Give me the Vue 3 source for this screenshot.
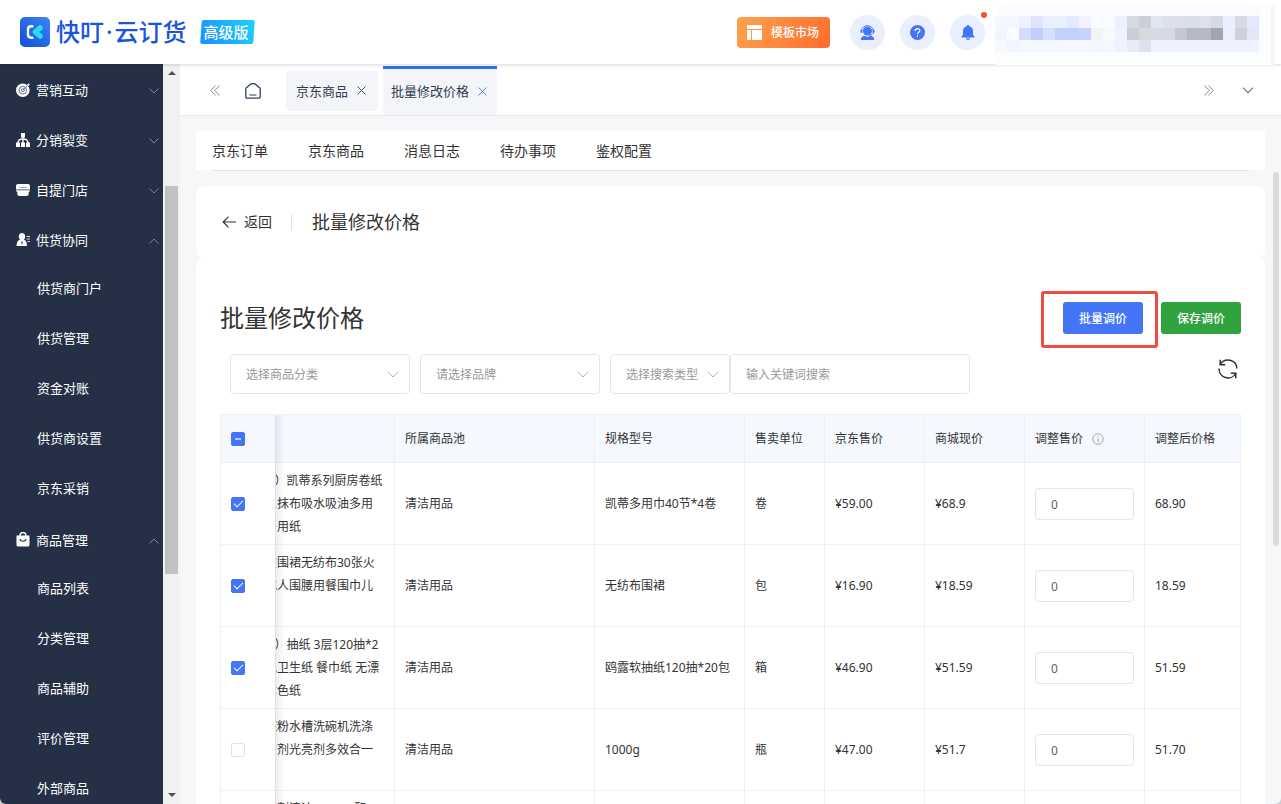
<script setup>
import { ref } from 'vue'

const menu = [
  { label: '营销互动', icon: 'target', open: false, children: [] },
  { label: '分销裂变', icon: 'tree', open: false, children: [] },
  { label: '自提门店', icon: 'store', open: false, children: [] },
  { label: '供货协同', icon: 'person', open: true, children: ['供货商门户', '供货管理', '资金对账', '供货商设置', '京东采销'] },
  { label: '商品管理', icon: 'bag', open: true, children: ['商品列表', '分类管理', '商品辅助', '评价管理', '外部商品'] },
]

const subnav = ['京东订单', '京东商品', '消息日志', '待办事项', '鉴权配置']

const rows = ref([
  { checked: true, name: ['w）凯蒂系列厨房卷纸', '人抹布吸水吸油多用', '房用纸'], pool: '清洁用品', spec: '凯蒂多用巾40节*4卷', unit: '卷', jd: '¥59.00', mall: '¥68.9', adjust: '0', after: '68.90' },
  { checked: true, name: ['性围裙无纺布30张火', '成人围腰用餐围巾儿'], pool: '清洁用品', spec: '无纺布围裙', unit: '包', jd: '¥16.90', mall: '¥18.59', adjust: '0', after: '18.59' },
  { checked: true, name: ['w）抽纸 3层120抽*2', '包卫生纸 餐巾纸 无漂', '本色纸'], pool: '清洁用品', spec: '鸥露软抽纸120抽*20包', unit: '箱', jd: '¥46.90', mall: '¥51.59', adjust: '0', after: '51.59' },
  { checked: false, name: ['碗粉水槽洗碗机洗涤', '洁剂光亮剂多效合一'], pool: '清洁用品', spec: '1000g', unit: '瓶', jd: '¥47.00', mall: '¥51.7', adjust: '0', after: '51.70' },
  { checked: false, name: ['洗剂清洁 1000g 配'], pool: '', spec: '', unit: '', jd: '', mall: '', adjust: '0', after: '' },
])

const p = (s) => s.split(' ').map((c) => '#' + c)
const mosaic = [
  ...p('fcfdff fafbff fafbff fafbff fafbff fafbff fafbff fafbff fafbff fafbff fafbff fafbff fafbff fafbff fafbff fafbff fafbff fafbff fafbff fafbff fafbff fafbff fcfdfd'),
  ...p('f4f7ff f4f7ff eef2fe dee4ff e9effe e9effd e5e9ff f1f1ff fafbff fafbff eaf0ff d4dae3 cacfd8 e0e5f2 dce1ec dae0e9 d9deeb dde1ed d4dbe5 e9efff d7dbe6 e3e9fc fafdff'),
  ...p('f1f5ff fbfcff d3dcff c2cffd d3dfff c6d0ff c2d0ff c8d2ff f3f4f8 f9f9f9 f0f3ff cbced7 d8d9db d7dae6 d6dae6 c7c6d0 b6b9c6 b6b9c6 a2a4af e9efff cfd0dc e1e7f8 fafdff'),
  ...p('f8f9ff f1f5ff f4f7ff f4f7ff f4f7ff f4f7ff f4f7ff f4f7ff f4f7ff f4f7ff f0f3ff e8ecf5 dee1ea eff1ff eff1ff eff1ff eff1ff eff1ff eff1ff eff1ff eff1ff eff1ff fafdff'),
]
</script>

<template>
  <div class="app">
    <header class="header">
      <div class="brand">
        <svg class="logo" viewBox="0 0 30 30">
          <defs>
            <linearGradient id="lg" x1="1" y1="0" x2="0" y2="1">
              <stop offset="0" stop-color="#3f83f4" /><stop offset="1" stop-color="#0f4fd8" />
            </linearGradient>
          </defs>
          <rect width="30" height="30" rx="5" fill="url(#lg)" />
          <path d="M12.500 9.300H11.300C9.200 9.300 8 10.500 8 12.500v5c0 2 1.200 3.200 3.300 3.200h1.200" fill="none" stroke="#fff" stroke-width="2.400" stroke-linecap="round" />
          <path d="M20.200 10.700 15.200 15l5 4.300" fill="none" stroke="#27dcf2" stroke-width="5.200" stroke-linecap="round" stroke-linejoin="round" />
        </svg>
        <span class="brand-name">快叮<span class="sep">·</span>云订货</span>
        <span class="edition">高级版</span>
      </div>
      <div class="header-actions">
        <button class="market" type="button">
          <svg width="15" height="15" viewBox="0 0 15 15" fill="#fff"><path d="M0 0h15v4H0zM0 5h4v10H0zM5 5h10v10H5z" /></svg>
          <span>模板市场</span>
        </button>
        <button class="round" type="button" aria-label="客服">
          <svg width="15" height="15" viewBox="0 0 15 15"><circle cx="7.500" cy="6" r="4.500" fill="#4475f7" /><path d="M1.500 7V5.500C2.300 2.500 4.500.7 7.500.7s5.200 1.800 6 4.800V7M13.400 7.500c-.5 1.800-2 2.700-4 3" fill="none" stroke="#4475f7" /><path d="M.5 4.800h2v3h-2zM12.500 4.800h2v3h-2z" fill="#4475f7" /><path d="M.8 15c0-2.600 1.500-3.900 3.700-4.200L7.500 12l3-1.200c2.200.3 3.700 1.600 3.700 4.200z" fill="#4475f7" /></svg>
        </button>
        <button class="round" type="button" aria-label="帮助">
          <svg width="15" height="15" viewBox="0 0 15 15"><circle cx="7.500" cy="7.500" r="7.500" fill="#4475f7" /><path d="M5.200 5.900c0-1.300 1-2.200 2.300-2.200s2.300.8 2.300 2c0 1.500-2.300 1.700-2.300 3.500M7.500 10.400v1.300" fill="none" stroke="#fff" stroke-width="1.200" /></svg>
        </button>
        <button class="round" type="button" aria-label="通知">
          <svg width="14" height="15" viewBox="0 0 14 15" fill="#4475f7"><path d="M6 0h2v1.200c2.500.4 4 2.200 4 4.600V10l1.500 1.600v.9H.5v-.9L2 10V5.800c0-2.400 1.500-4.200 4-4.600zM5 13.300h4c-.2 1-1 1.700-2 1.700s-1.800-.7-2-1.700z" /></svg>
          <i class="dot"></i>
        </button>
        <div class="account">
          <i v-for="(c, i) in mosaic" :key="i" :style="{ background: c }"></i>
        </div>
      </div>
    </header>

    <div class="body">
      <aside class="sidebar">
        <nav class="menu">
          <template v-for="m in menu" :key="m.label">
            <a class="item" href="#">
              <svg v-if="m.icon === 'target'" width="14" height="14" viewBox="0 0 14 14"><circle cx="6.800" cy="7.200" r="6.800" fill="#fff" /><g fill="none" stroke="#66708a"><circle cx="6.800" cy="7.200" r="3.800" /><circle cx="6.800" cy="7.200" r="1.500" /><path d="M6.800 7.200 12.500 1.500" /></g><path d="m11 2 2-2 .2 1 .8.300-2 2z" fill="#fff" /></svg>
              <svg v-else-if="m.icon === 'tree'" width="14" height="14" viewBox="0 0 14 14"><path d="M5 0h4v4.500H5zM0 9.500h4V14H0zM5 9.500h4V14H5zM10 9.500h4V14h-4z" fill="#fff" /><path d="M7 4v6M7 6C3.500 6 2 7.500 2 10M7 6c3.500 0 5 1.500 5 4" fill="none" stroke="#fff" stroke-width="1.400" /></svg>
              <svg v-else-if="m.icon === 'store'" width="14" height="12" viewBox="0 0 14 12"><path d="M2 0h10a2 2 0 0 1 2 2v3.500H0V2a2 2 0 0 1 2-2zM0 6.200h14c-.2 1-.6 1.500-1.300 1.700V10a2 2 0 0 1-2 2H3.300a2 2 0 0 1-2-2V7.900C.6 7.700.2 7.200 0 6.200z" fill="#fff" /><path d="M3 3.500h8" stroke="#a4abbb" /></svg>
              <svg v-else-if="m.icon === 'person'" width="14" height="13" viewBox="0 0 14 13"><path d="M6 0c2 0 3.200 1.500 3.200 3.400 0 1.300-.5 2.500-1.300 3.200 1.900.8 3.100 2.600 3.100 6.400H.5c0-3.800 1.500-5.600 3.600-6.400-.8-.7-1.300-1.900-1.300-3.200C2.800 1.500 4 0 6 0z" fill="#fff" /><path d="m6 8 .7 1.500L6 12l-.7-2.500z" fill="#252f46" /><path d="M10.500 3.500H14M10.500 6H14M11.500 8.500H14" stroke="#d5d9e2" /></svg>
              <svg v-else width="14" height="15" viewBox="0 0 14 15"><path d="M4 5V3.500a3 3 0 0 1 6 0V5" fill="none" stroke="#fff" stroke-width="1.400" /><path d="M.5 3.500h13V13a1.500 1.500 0 0 1-1.500 1.500H2A1.500 1.500 0 0 1 .5 13z" fill="#fff" /><path d="M4 7c.5 3 5.500 3 6 0" fill="none" stroke="#252f46" stroke-width="1.200" /></svg>
              <span>{{ m.label }}</span>
              <svg class="caret" :class="{ up: m.open }" width="10" height="6" viewBox="0 0 10 6"><path d="m.5.500 4.500 4.500L9.500.500" fill="none" stroke="#7f8491" /></svg>
            </a>
            <div v-if="m.children.length" class="children">
              <a v-for="c in m.children" :key="c" class="child" href="#">{{ c }}</a>
            </div>
          </template>
        </nav>
        <div class="scrollbar">
          <svg width="8" height="4" viewBox="0 0 8 4"><path d="M4 0 8 4H0z" fill="#505050" /></svg>
          <div class="track"><div class="thumb"></div></div>
          <svg width="8" height="4" viewBox="0 0 8 4"><path d="M0 0h8L4 4z" fill="#505050" /></svg>
        </div>
      </aside>

      <main class="main">
        <div class="tabbar">
          <svg width="10" height="11" viewBox="0 0 10 11"><path d="M5.500.500.700 5.500l4.800 5M9.500.500 4.700 5.500l4.800 5" fill="none" stroke="#8b8f99" /></svg>
          <svg class="home" width="16" height="16" viewBox="0 0 16 16"><path d="M.8 5.200 5.500 1.200Q8 0 10.500 1.200L15.200 5.200V14a1.200 1.200 0 0 1-1.200 1.200H2A1.200 1.200 0 0 1 .8 14z" fill="none" stroke="#30405c" stroke-width="1.300" stroke-linejoin="round" /><path d="M4.500 12h7" stroke="#7d828c" stroke-width="1.600" /></svg>
          <a class="tab" href="#">京东商品<svg width="9" height="9" viewBox="0 0 9 9"><path d="m.5.500 8 8m0-8-8 8" stroke="#4a4f5a" /></svg></a>
          <a class="tab active" href="#">批量修改价格<svg width="9" height="9" viewBox="0 0 9 9"><path d="m.5.500 8 8m0-8-8 8" stroke="#5b84f2" /></svg></a>
          <div class="tab-tools">
            <svg width="10" height="11" viewBox="0 0 10 11"><path d="m.5.500 4.800 5-4.800 5M4.500.500l4.800 5-4.800 5" fill="none" stroke="#8b8f99" /></svg>
            <svg width="12" height="7" viewBox="0 0 12 7"><path d="m1 .7 5 5 5-5" fill="none" stroke="#777" stroke-width="1.200" /></svg>
          </div>
        </div>

        <div class="content">
          <nav class="subnav">
            <a v-for="s in subnav" :key="s" href="#">{{ s }}</a>
          </nav>
          <div class="rule"></div>

          <section class="card page-head">
            <a class="back" href="#"><svg width="14" height="12" viewBox="0 0 14 12"><path d="M6.500.700 1.200 6l5.300 5.300M1.200 6H14" fill="none" stroke="#333" stroke-width="1.200" /></svg>返回</a>
            <h1>批量修改价格</h1>
          </section>

          <section class="card panel">
            <div class="panel-head">
              <h2>批量修改价格</h2>
              <div class="panel-actions">
                <div class="marked"><button class="btn blue" type="button">批量调价</button></div>
                <button class="btn green" type="button">保存调价</button>
              </div>
            </div>
            <div class="filters">
              <div class="select">
                <select aria-label="商品分类"><option>选择商品分类</option></select>
                <svg width="12" height="7" viewBox="0 0 12 7"><path d="m.7.700 5.300 5.300L11.300.700" fill="none" stroke="#aeb1b8" /></svg>
              </div>
              <div class="select">
                <select aria-label="品牌"><option>请选择品牌</option></select>
                <svg width="12" height="7" viewBox="0 0 12 7"><path d="m.7.700 5.300 5.300L11.300.700" fill="none" stroke="#aeb1b8" /></svg>
              </div>
              <div class="search">
                <div class="select narrow">
                  <select aria-label="搜索类型"><option>选择搜索类型</option></select>
                  <svg width="12" height="7" viewBox="0 0 12 7"><path d="m.7.700 5.300 5.300L11.300.700" fill="none" stroke="#aeb1b8" /></svg>
                </div>
                <input class="keyword" type="text" placeholder="输入关键词搜索" aria-label="关键词">
              </div>
              <button class="refresh" type="button" aria-label="刷新">
                <svg width="20" height="20" viewBox="0 0 20 20" fill="none" stroke="#333" stroke-width="1.500"><path d="M2.300 5.500A8.900 8.900 0 0 1 18.900 9.500M17.700 14.500A8.900 8.900 0 0 1 1.100 9.500" /><path d="M2.200.800v5h5M17.800 19.200v-5h-5" /></svg>
              </button>
            </div>

            <table>
              <colgroup>
                <col class="w-check"><col><col class="w-200"><col class="w-150"><col class="w-80"><col class="w-100"><col class="w-100"><col class="w-120"><col class="w-96">
              </colgroup>
              <thead>
                <tr>
                  <th class="pin"><input type="checkbox" :indeterminate="true" aria-label="全选"></th>
                  <th></th><th>所属商品池</th><th>规格型号</th><th>售卖单位</th><th>京东售价</th><th>商城现价</th>
                  <th>调整售价<svg class="info" width="12" height="12" viewBox="0 0 12 12" fill="none" stroke="#a3a6ad"><circle cx="6" cy="6" r="5.200" /><path d="M6 3v1M6 5v4" /></svg></th>
                  <th>调整后价格</th>
                </tr>
              </thead>
              <tbody>
                <tr v-for="(r, i) in rows" :key="i">
                  <td class="pin"><input v-model="r.checked" type="checkbox" :aria-label="'选择' + r.spec"></td>
                  <td><div class="name"><div v-for="n in r.name" :key="n">{{ n }}</div></div></td>
                  <td>{{ r.pool }}</td>
                  <td>{{ r.spec }}</td>
                  <td>{{ r.unit }}</td>
                  <td>{{ r.jd }}</td>
                  <td>{{ r.mall }}</td>
                  <td><input v-model="r.adjust" class="amount" type="text" aria-label="调整售价"></td>
                  <td>{{ r.after }}</td>
                </tr>
              </tbody>
            </table>
          </section>
          <div class="page-thumb"></div>
        </div>
      </main>
    </div>
  </div>
</template>

<style>
body {
  background: #c9ccd2;
}
</style>

<style scoped>
* {
  box-sizing: border-box;
}
.app {
  height: 100vh;
  display: flex;
  flex-direction: column;
  overflow: hidden;
  border-radius: 0 0 6px 6px;
  background: #f6f7f9;
  color: #333;
  font: 12px/20px "Noto Sans", "Noto Sans CJK SC", sans-serif;
}
a {
  color: inherit;
  text-decoration: none;
}
button,
input,
select {
  font: inherit;
  margin: 0;
}
button {
  border: 0;
  padding: 0;
  cursor: pointer;
}
svg {
  flex: none;
  display: block;
}
h1,
h2 {
  margin: 0;
  font-weight: 400;
}
.header {
  position: relative;
  z-index: 3;
  flex: none;
  height: 64px;
  padding: 0 6px 0 20px;
  display: flex;
  align-items: center;
  justify-content: space-between;
  background: #fff;
  box-shadow: 0 1px 3px rgba(0, 0, 0, 0.16);
}
.brand {
  display: flex;
  align-items: center;
}
.logo {
  width: 30px;
  height: 30px;
}
.brand-name {
  margin: 0 13px 0 6px;
  font-size: 24px;
  line-height: 30px;
  font-weight: 500;
  color: #1a56db;
}
.sep {
  padding: 0 2px;
}
.edition {
  position: relative;
  z-index: 0;
  width: 55px;
  padding-right: 2px;
  font-size: 15px;
  line-height: 24px;
  font-weight: 500;
  text-align: center;
  color: #fff;
}
.edition::before {
  content: "";
  position: absolute;
  inset: 0 1px;
  z-index: -1;
  border-radius: 2px;
  background: linear-gradient(60deg, #1890ff, #1fd0ff);
  transform: skewX(-4deg);
}
.header-actions {
  display: flex;
  align-items: center;
}
.market {
  display: flex;
  align-items: center;
  gap: 9px;
  width: 93px;
  height: 31px;
  padding-left: 10px;
  margin-right: 20px;
  border-radius: 4px;
  background: linear-gradient(120deg, #ffa24d, #ff6c2e);
  color: #fff;
  font-weight: 500;
  white-space: nowrap;
}
.market span {
  padding-top: 2px;
}
.round {
  position: relative;
  display: flex;
  align-items: center;
  justify-content: center;
  width: 35px;
  height: 35px;
  margin-right: 15px;
  border-radius: 50%;
  background: #e9efff;
}
.dot {
  position: absolute;
  top: -3px;
  right: -2px;
  width: 6px;
  height: 6px;
  border-radius: 50%;
  background: #ff5127;
}
.account {
  align-self: stretch;
  display: grid;
  grid-template-columns: repeat(23, 12px);
  grid-template-rows: 11px 12px 12px 12px;
  height: 60px;
  margin-top: 6px;
  margin-left: -5px;
  border-right: 4px solid #f4f5f5;
  background: #fcfefd;
}
.body {
  flex: 1;
  min-height: 0;
  display: flex;
}
.sidebar {
  flex: none;
  width: 180px;
  display: flex;
  background: #f1f1f1;
}
.menu {
  flex: 1;
  overflow: hidden;
  background: #252f46;
  color: #fff;
  font-size: 13px;
}
.item {
  display: flex;
  align-items: center;
  gap: 6px;
  height: 50px;
  padding: 1px 4px 0 16px;
}
.caret {
  margin-top: 2px;
  margin-left: auto;
}
.caret.up {
  transform: rotate(180deg);
}
.children {
  display: flex;
  flex-direction: column;
}
.child {
  height: 50px;
  padding-left: 37px;
  line-height: 48px;
}
.scrollbar {
  width: 17px;
  display: flex;
  flex-direction: column;
  align-items: center;
  padding: 7px 0;
}
.track {
  flex: 1;
  width: 13px;
  padding: 111px 0 0;
}
.thumb {
  height: 64%;
  background: #c1c1c1;
}
.main {
  flex: 1;
  min-width: 0;
  display: flex;
  flex-direction: column;
}
.tabbar {
  flex: none;
  display: flex;
  align-items: center;
  height: 52px;
  padding: 2px 27px 0 30px;
  border-bottom: 1px solid #ebecef;
  background: #fff;
}
.home {
  margin: 0 25px;
}
.tab {
  display: flex;
  align-items: center;
  gap: 9px;
  height: 40px;
  padding: 0 12px 0 10px;
  margin-right: 5px;
  border-radius: 4px;
  background: #f4f5f8;
  color: #303a50;
  font-size: 13px;
}
.tab.active {
  align-self: stretch;
  height: auto;
  padding: 0 10px 2px 8px;
  border-top: 3px solid #2f73e8;
  border-radius: 0;
}
.tab-tools {
  display: flex;
  align-items: center;
  gap: 28px;
  margin-left: auto;
}
.content {
  position: relative;
  flex: 1;
  min-height: 0;
  display: flex;
  flex-direction: column;
  padding: 15px 16px 0;
  overflow: hidden;
}
.subnav {
  flex: none;
  display: flex;
  align-items: center;
  gap: 40px;
  height: 39px;
  padding: 0 16px;
  background: #fff;
  font-size: 14px;
}
.rule {
  flex: none;
  height: 1px;
  margin: 0 16px 15px;
  background: #e3e4e8;
}
.card {
  flex: none;
  border-radius: 8px;
  background: #fff;
}
.page-head {
  display: flex;
  align-items: center;
  height: 72px;
  padding: 0 26px;
}
.back {
  display: flex;
  align-items: center;
  gap: 8px;
  padding-right: 19px;
  font-size: 14px;
}
.page-head h1 {
  display: flex;
  align-items: center;
  font-size: 18px;
  line-height: 24px;
}
.page-head h1::before {
  content: "";
  width: 1px;
  height: 16px;
  margin-right: 20px;
  background: #dfe1e6;
}
.panel {
  padding: 44px 24px 0;
}
.panel-head {
  display: flex;
  align-items: center;
  justify-content: space-between;
}
.panel-head h2 {
  font-size: 24px;
  line-height: 32px;
}
.panel-actions {
  display: flex;
  gap: 18px;
}
.marked {
  position: relative;
}
.marked::after {
  content: "";
  position: absolute;
  inset: -11px -15px -14px -22px;
  border: 3px solid #ee4c40;
  border-radius: 3px;
  pointer-events: none;
}
.btn {
  display: block;
  width: 80px;
  height: 32px;
  padding-top: 2px;
  border-radius: 3px;
  color: #fff;
  font-weight: 500;
}
.blue {
  background: #4475f7;
}
.green {
  background: #31a33e;
}
.filters {
  display: flex;
  gap: 10px;
  padding: 20px 3px 20px 10px;
}
.select {
  position: relative;
  width: 180px;
}
.select.narrow {
  width: 120px;
}
.select svg {
  position: absolute;
  top: 17px;
  right: 11px;
  pointer-events: none;
}
.select select,
.keyword {
  display: block;
  width: 100%;
  height: 40px;
  padding: 0 15px;
  border: 1px solid #e4e5e8;
  border-radius: 4px;
  background: #fff;
  color: #999;
  appearance: none;
  outline: none;
}
.select select {
  padding: 2px 0 0 15px;
}
.keyword::placeholder {
  color: #999;
}
.search {
  display: flex;
}
.search .keyword {
  width: 240px;
}
.refresh {
  align-self: flex-start;
  margin: 5px 0 0 auto;
  background: none;
}
table {
  width: 100%;
  table-layout: fixed;
  border-spacing: 0;
  border-top: 1px solid #eff0f2;
  border-left: 1px solid #eff0f2;
}
.w-check { width: 55px; }
.w-200 { width: 200px; }
.w-150 { width: 150px; }
.w-80 { width: 80px; }
.w-100 { width: 100px; }
.w-120 { width: 120px; }
.w-96 { width: 96px; }
th,
td {
  padding: 6px 10px;
  border-right: 1px solid #eff0f2;
  border-bottom: 1px solid #eff0f2;
  background: #fff;
  font-weight: 400;
  text-align: left;
  white-space: nowrap;
}
th {
  height: 48px;
  padding: 0 10px;
  background: #f5f8ff;
}
.pin {
  position: relative;
  z-index: 1;
}
.pin::after {
  content: "";
  position: absolute;
  top: 0;
  bottom: -1px;
  left: 100%;
  width: 10px;
  background: linear-gradient(90deg, rgba(0, 0, 0, 0.07), rgba(0, 0, 0, 0));
}
.name {
  min-height: 69px;
  margin-left: -21px;
  line-height: 23px;
}
.info {
  display: inline-block;
  margin-left: 9px;
  vertical-align: -2px;
}
input[type="checkbox"] {
  display: flex;
  align-items: center;
  justify-content: center;
  width: 14px;
  height: 14px;
  border: 1px solid #dfe1e5;
  border-radius: 2px;
  background: #fff;
  appearance: none;
}
input[type="checkbox"]:checked,
input[type="checkbox"]:indeterminate {
  border-color: #4475f7;
  background: #4475f7;
}
input[type="checkbox"]:checked::after {
  content: "";
  width: 8px;
  height: 4px;
  margin-bottom: 3px;
  border: solid #fff;
  border-width: 0 0 1px 1px;
  transform: rotate(-45deg);
}
input[type="checkbox"]:indeterminate::after {
  content: "";
  width: 6px;
  height: 2px;
  background: #b4c8fc;
}
.amount {
  display: block;
  width: 100%;
  height: 32px;
  padding: 2px 15px 0;
  border: 1px solid #e4e5e8;
  border-radius: 4px;
  color: #606266;
  outline: none;
}
.page-thumb {
  position: absolute;
  top: 56px;
  right: 2px;
  width: 6px;
  height: 374px;
  border-radius: 3px;
  background: #d9dadc;
}
</style>
